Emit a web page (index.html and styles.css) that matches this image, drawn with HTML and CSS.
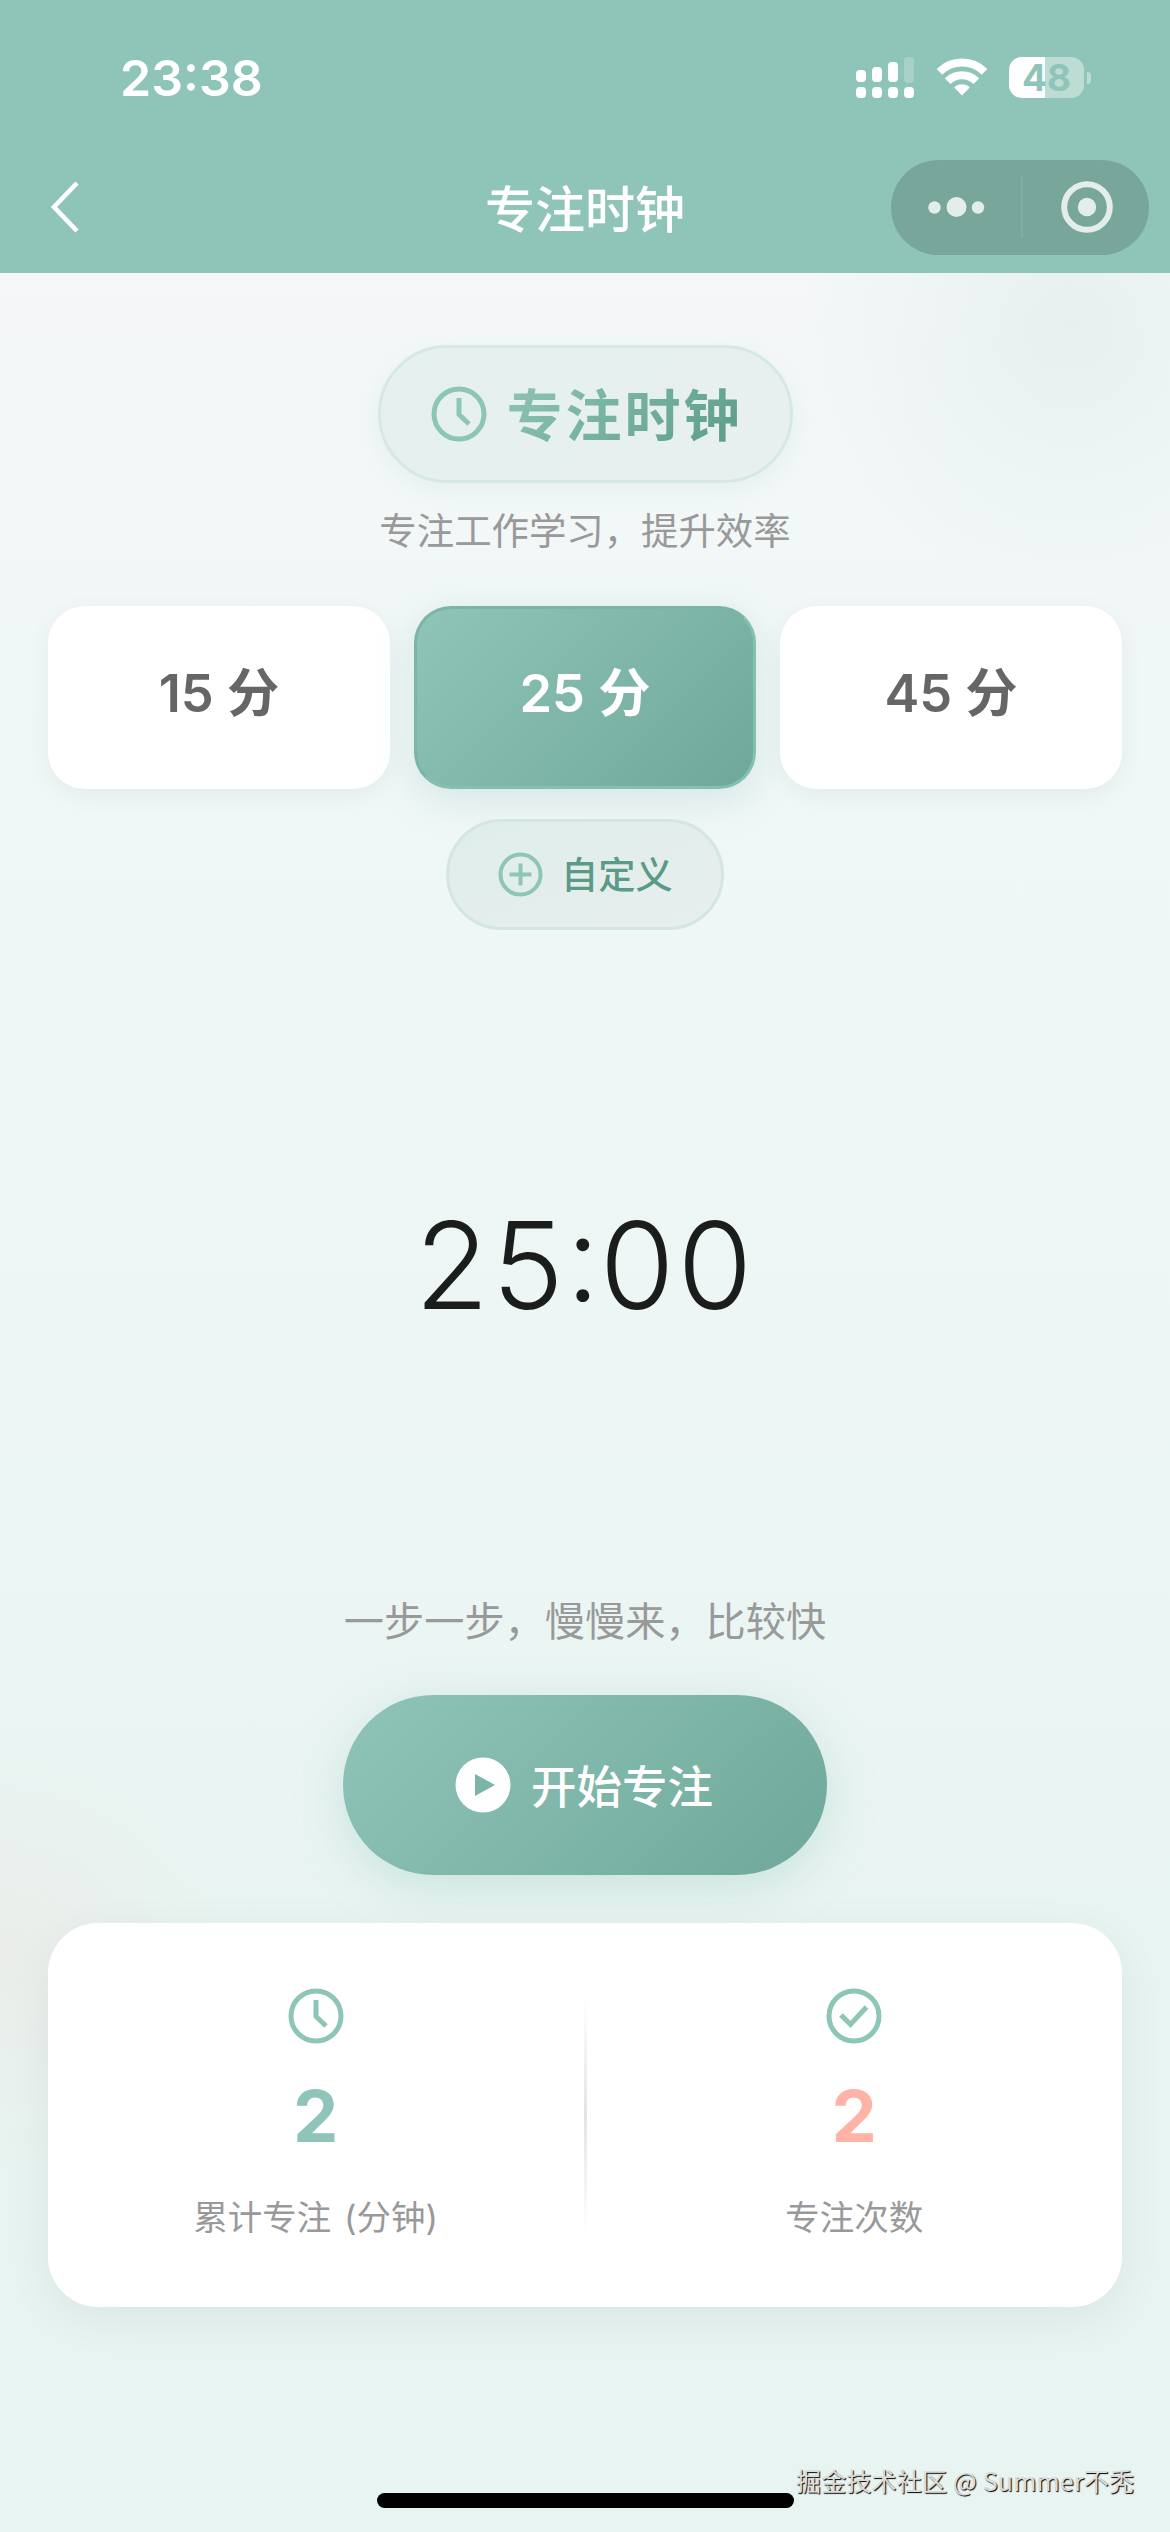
FILE: index.html
```html
<!DOCTYPE html>
<html lang="zh-CN">
<head>
<meta charset="utf-8">
<title>专注时钟</title>
<link rel="stylesheet" href="styles.css">
</head>
<body>
<header class="header">
  <div class="status">
    <span class="status-time">23:38</span>
    <div class="status-icons">
      <svg class="signal" width="58" height="41" viewBox="0 0 58 41" fill="#fff">
        <rect x="0" y="13" width="10" height="12" rx="4"/><rect x="16" y="10" width="10" height="15" rx="4"/><rect x="32" y="5" width="10" height="20" rx="4"/><rect x="48" y="0" width="10" height="26" rx="4" opacity=".22"/>
        <rect x="0" y="30" width="10" height="11" rx="4"/><rect x="16" y="30" width="10" height="11" rx="4"/><rect x="32" y="30" width="10" height="11" rx="4"/><rect x="48" y="30" width="10" height="11" rx="4"/>
      </svg>
      <svg class="wifi" width="52" height="38" viewBox="0 0 52 38" fill="none" stroke="#fff" stroke-width="8">
        <path d="M3.5 13.8a32 32 0 0 1 45 0"/><path d="M11.6 23.2a20.5 20.5 0 0 1 28.800 0"/><path d="M26 37.500l-7.800-7.900a11 11 0 0 1 15.600 0z" fill="#fff" stroke="none"/>
      </svg>
      <div class="battery"><span class="battery-level">48</span><i class="battery-tip"></i></div>
    </div>
  </div>
  <nav class="nav">
    <svg class="back" width="32" height="54" viewBox="0 0 32 54" fill="none" stroke="#fff" stroke-width="4.6"><path d="M27 3L4 27l23 24"/></svg>
    <h1 class="nav-title">专注时钟</h1>
    <div class="capsule">
      <svg width="57" height="22" viewBox="0 0 57 22" fill="#e3eeeb"><circle cx="6.5" cy="11.5" r="6.2"/><circle cx="28.5" cy="11" r="10"/><circle cx="50" cy="11.5" r="6.2"/></svg>
      <i class="capsule-line"></i>
      <svg width="52" height="52" viewBox="0 0 52 52"><circle cx="26" cy="26" r="22.800" fill="none" stroke="#e3eeeb" stroke-width="6"/><circle cx="26" cy="26" r="9.200" fill="#e3eeeb"/></svg>
    </div>
  </nav>
</header>
<main class="page">
  <section class="hero">
    <svg class="icon-66" viewBox="0 0 66 66" fill="none" stroke="#8dc5b7" stroke-width="5"><circle cx="33" cy="33" r="25"/><path d="M33 17v16.500l10 9.500"/></svg>
    <h2 class="hero-title">专注时钟</h2>
  </section>
  <p class="subtitle">专注工作学习，提升效率</p>
  <section class="presets">
    <button class="preset">15 分</button>
    <button class="preset preset-active">25 分</button>
    <button class="preset">45 分</button>
  </section>
  <button class="custom">
    <svg class="icon-53" viewBox="0 0 53 53" fill="none" stroke="#8dc5b7" stroke-width="4"><circle cx="26.500" cy="26.500" r="20"/><path d="M26.500 15.500v22M15.500 26.500h22"/></svg>
    <span class="custom-text">自定义</span>
  </button>
  <section class="timer">25<span class="timer-colon">:</span>00</section>
  <p class="motto">一步一步，慢慢来，比较快</p>
  <button class="start">
    <svg class="icon-66" viewBox="0 0 66 66"><circle cx="33" cy="33" r="27.500" fill="#fff"/><path d="M25 22v22l20-11z" fill="#7bb5a6"/></svg>
    <span class="start-text">开始专注</span>
  </button>
  <section class="stats">
    <div class="stat">
      <svg class="icon-66" viewBox="0 0 66 66" fill="none" stroke="#8dc5b7" stroke-width="5"><circle cx="33" cy="33" r="25"/><path d="M33 17v16.500l10 9.500"/></svg>
      <strong class="stat-value">2</strong>
      <span class="stat-label">累计专注 (分钟)</span>
    </div>
    <i class="stats-line"></i>
    <div class="stat">
      <svg class="icon-66" viewBox="0 0 66 66" fill="none" stroke="#8dc5b7" stroke-width="5"><circle cx="33" cy="33" r="25"/><path d="M20 32l9.500 9.500L45.500 24"/></svg>
      <strong class="stat-value stat-value-coral">2</strong>
      <span class="stat-label">专注次数</span>
    </div>
  </section>
</main>
<div class="home-bar"></div>
<div class="watermark">掘金技术社区 @ Summer不秃</div>
</body>
</html>
```

FILE: styles.css
```css
* { box-sizing: border-box; }
body {
  margin: 0;
  width: 1170px;
  height: 2532px;
  position: relative;
  overflow: hidden;
  font-family: Inter, "Noto Sans CJK SC", sans-serif;
  background: #e8f4f1;
}
h1, h2, p { margin: 0; }
button { border: 0; font: inherit; }
svg { display: block; flex: none; }

.header { height: 273px; background: #8fc5b8; color: #fff; display: flex; flex-direction: column; }
.status { height: 141px; padding: 57px 79px 0 120px; display: flex; justify-content: space-between; align-items: flex-start; }
.status-time { font-size: 50px; font-weight: 600; line-height: 42px; }
.status-icons { display: flex; align-items: flex-start; }
.wifi { margin: 1px 21px 0 22px; }
.battery { position: relative; width: 75px; height: 41px; margin-right: 7px; border-radius: 13px; background: linear-gradient(90deg, #fff 36px, #bcdcd4 36px); }
.battery-level { display: block; text-align: center; font-size: 37px; line-height: 42px; font-weight: 700; color: #8fc5b8; }
.battery-tip { position: absolute; left: 78px; top: 15px; width: 4px; height: 12px; border-radius: 0 4px 4px 0; background: #bcdcd4; }

.nav { height: 132px; padding: 0 21px 0 50px; display: grid; grid-template-columns: 258px 1fr 258px; align-items: center; }
.nav-title { text-align: center; font-size: 50px; font-weight: 500; line-height: 70px; padding: 5px 29px 0 0; }
.capsule { height: 95px; border-radius: 48px; background: #78a69b; display: flex; align-items: center; padding-left: 37px; }
.capsule-line { width: 1.500px; height: 62px; background: #82aea3; margin: 0 38px 0 36px; }

.page {
  height: 2259px;
  padding: 72px 48px 0;
  display: flex;
  flex-direction: column;
  align-items: center;
  background:
    radial-gradient(circle at 1070px 50px, rgba(143,197,175,.13), rgba(143,197,175,0) 270px),
    radial-gradient(circle at 0 1680px, rgba(255,179,167,.1), rgba(255,179,167,0) 220px),
    linear-gradient(180deg, #f5f7f9 0, #f0f7f7 420px, #edf6f5 1100px, #e8f4f1 1700px);
}
.hero { width: 415px; height: 138px; border: 3px solid #d6e8e4; border-radius: 69px; background: linear-gradient(135deg, #e5f1ee, #e8eff0); box-shadow: 0 6px 25px rgba(143,197,184,.14); display: flex; align-items: center; padding-left: 45px; gap: 15px; }
.icon-66 { width: 66px; height: 66px; }
.icon-53 { width: 53px; height: 53px; }
.hero-title { padding-top: 3px; font-size: 56px; line-height: 80px; font-weight: 700; letter-spacing: 3px; color: transparent; background: linear-gradient(135deg, #8fc5b8, #5a9a87); -webkit-background-clip: text; background-clip: text; }
.subtitle { margin-top: 21px; height: 56px; font-size: 37.400px; line-height: 56px; color: #999; }

.presets { width: 100%; margin-top: 46px; display: grid; grid-template-columns: repeat(3, 1fr); gap: 24px; }
.preset { height: 183px; padding: 0 0 10px; border-radius: 37px; background: #fff; color: #666; font-size: 52.300px; font-weight: 600; line-height: 76px; box-shadow: 0 6px 25px rgba(0,0,0,.05); }
.preset-active { color: #fff; border: 3px solid #83bfae; border-color: #7ab5a5 #83c0b0 #83c0b0 #7ab5a5; background: linear-gradient(135deg, #8fc5b8, #6fa89a); box-shadow: 0 9px 38px rgba(143,197,184,.3); }
.custom { width: 278px; height: 111px; margin-top: 30px; border: 3px solid #d3e6e1; border-radius: 56px; background: linear-gradient(160deg, #dfeeea, #e7eeee); color: #5a9a87; font-size: 37.200px; font-weight: 500; display: flex; align-items: center; padding: 0 0 0 45px; gap: 14px; }
.custom-text { padding-bottom: 3px; }

.timer { height: 655px; padding-top: 10px; font-size: 121px; font-weight: 300; line-height: 650px; letter-spacing: 3px; color: #1a1d1c; }
.timer-colon { display: inline-block; line-height: 1; margin: 0 -3px 0 -1px; transform: translateY(-8px); }
.motto { height: 60px; margin-top: 7px; line-height: 60px; font-size: 40.200px; color: #999; }
.start { width: 484px; height: 180px; margin-top: 43px; border-radius: 90px; background: linear-gradient(135deg, #8fc5b8, #6fa89a); box-shadow: 0 12px 47px rgba(143,197,184,.35); color: #fff; font-size: 45.500px; font-weight: 500; display: flex; align-items: center; justify-content: center; gap: 15px; padding: 0 7px 0 0; }
.start-text { padding-bottom: 3px; }

.stats { width: 100%; height: 384px; margin-top: 48px; border-radius: 50px; background: #fff; box-shadow: 0 12px 47px rgba(0,0,0,.06); display: grid; grid-template-columns: 1fr 3px 1fr; align-items: start; }
.stat { padding-top: 60px; display: flex; flex-direction: column; align-items: center; }
.stat-value { margin-top: 17px; font-size: 72px; font-weight: 700; line-height: 100px; color: #8fc5b8; }
.stat-value-coral { color: #ffb3a7; }
.stat-label { margin-top: 26px; font-size: 34.500px; line-height: 52px; word-spacing: 3px; color: #999; }
.stats-line { height: 234px; margin-top: 75px; background: linear-gradient(180deg, rgba(228,228,228,0), #e4e4e4, rgba(228,228,228,0)); }

.home-bar { position: absolute; left: 377px; top: 2493px; width: 417px; height: 15px; border-radius: 8px; background: #000; }
.watermark { position: absolute; left: 796px; top: 2462px; font-family: "Noto Sans CJK SC", sans-serif; font-size: 25px; letter-spacing: .2px; line-height: 36px; color: #dcdcdc; text-shadow: 1px 1px 1px #000; white-space: nowrap; }
```
